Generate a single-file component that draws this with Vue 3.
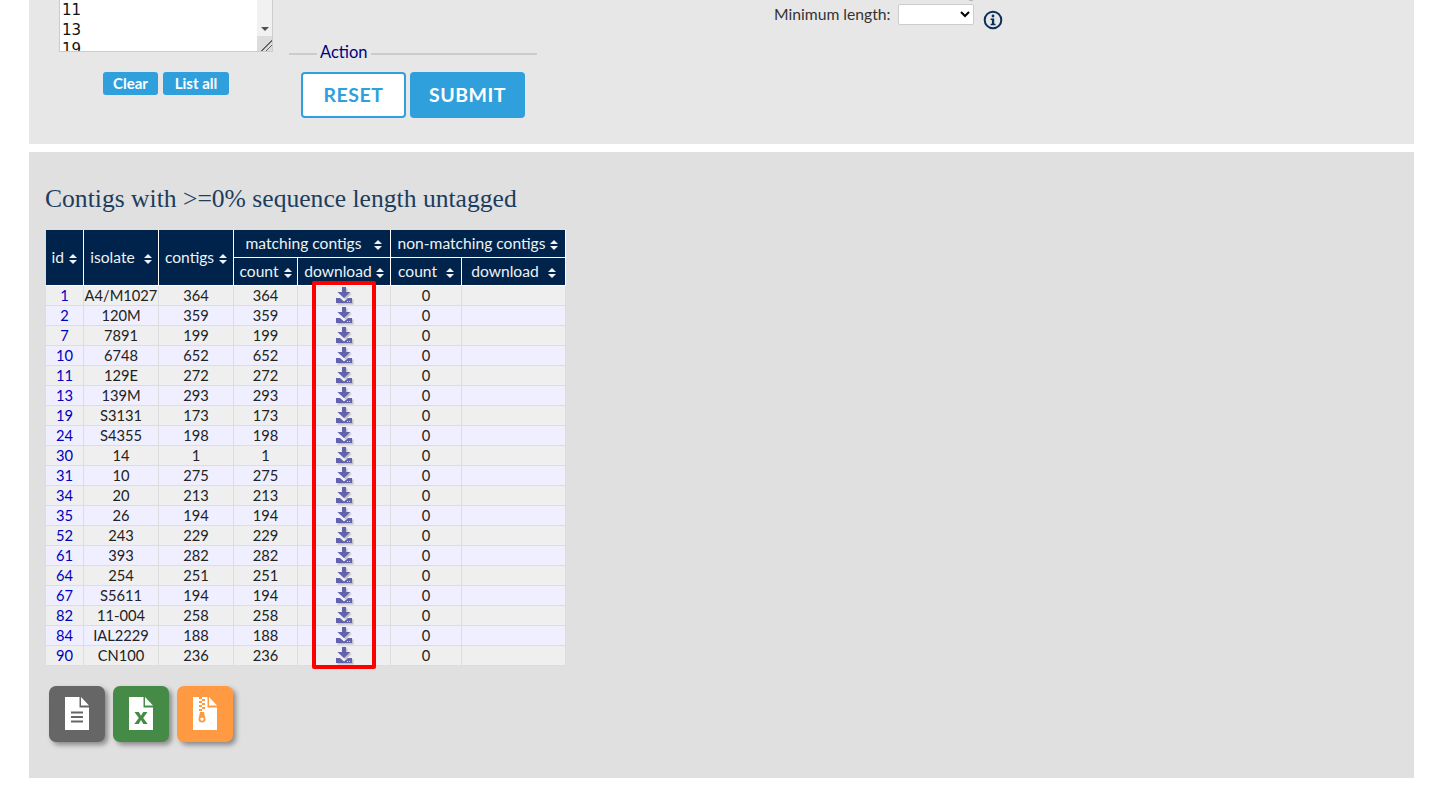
<template>
  <div class="page">
    <section class="panel top">
      <div class="isolates">
        <div class="listbox">
          <div class="list-items">
            <div v-for="n in visibleIds" :key="n">{{ n }}</div>
          </div>
          <div class="scrollbar">
            <span class="scroll-thumb"></span>
            <span class="scroll-arrow"></span>
            <span class="resizer"></span>
          </div>
        </div>
        <div class="list-buttons">
          <button class="small-btn clear">Clear</button>
          <button class="small-btn all">List all</button>
        </div>
      </div>

      <fieldset class="action">
        <legend>Action</legend>
        <button class="big-btn reset">RESET</button>
        <button class="big-btn submit">SUBMIT</button>
      </fieldset>

      <div class="min-length">
        <svg class="info clipped" viewBox="0 0 20 20"><circle cx="10" cy="10" r="8.3" /></svg>
        <div class="min-row">
          <label>Minimum length:</label>
          <select class="min-select"><option></option></select>
          <svg class="info" viewBox="0 0 20 20">
            <circle cx="10" cy="10" r="8.3" />
            <circle class="dot" cx="10" cy="6" r="1.4" />
            <path class="dot" d="M7.6 8.6h3.6v5.2h1.3v1.500H7.6v-1.500h1.300v-3.700H7.600z" />
          </svg>
        </div>
      </div>
    </section>

    <section class="panel results">
      <h2>Contigs with &gt;=0% sequence length untagged</h2>

      <div class="table-wrap">
        <table>
          <colgroup>
            <col v-for="w in colWidths" :key="w.id" :style="{ width: w.px + 'px' }" />
          </colgroup>
          <thead>
            <tr>
              <th rowspan="2">id<i class="sort"></i></th>
              <th rowspan="2">isolate<i class="sort wide"></i></th>
              <th rowspan="2">contigs<i class="sort"></i></th>
              <th class="shifted" colspan="2">matching contigs<i class="sort far"></i></th>
              <th colspan="2">non-matching contigs<i class="sort"></i></th>
            </tr>
            <tr class="sub">
              <th>count<i class="sort"></i></th>
              <th>download<i class="sort tight"></i></th>
              <th>count<i class="sort wide"></i></th>
              <th>download<i class="sort wide"></i></th>
            </tr>
          </thead>
          <tbody>
            <tr v-for="row in rows" :key="row[0]">
              <td><a href="#">{{ row[0] }}</a></td>
              <td>{{ row[1] }}</td>
              <td>{{ row[2] }}</td>
              <td>{{ row[2] }}</td>
              <td class="dl">
                <svg viewBox="0 0 20 18" width="20" height="18">
                  <path class="dl-shadow" d="M9.500 1.500h4v5h4.500l-6.500 6-6.500-6h4.500zM3.500 12.500h4l4 3.500 4-3.500h4v5h-16z" />
                  <path class="dl-icon" d="M8 0h4v5h4.500l-6.500 6-6.500-6H8zM2 11h4l4 3.500 4-3.500h4v5H2z" />
                  <path class="dl-dots" d="M13 14h1v1h-1zM15 14h1v1h-1z" />
                </svg>
              </td>
              <td>0</td>
              <td></td>
            </tr>
          </tbody>
        </table>
        <div class="highlight"></div>
      </div>

      <div class="exports">
        <a class="export grey" href="#">
          <svg viewBox="0 0 24 33" width="24" height="33">
            <path class="sheet" d="M0 0h14.500v10.500H24V33H0zM16 0l8 8.500h-8z" />
            <path class="mark" d="M6 14.500h12v2H6zM6 19h12v2H6zM6 23.500h12v2H6z" />
          </svg>
        </a>
        <a class="export green" href="#">
          <svg viewBox="0 0 24 33" width="24" height="33">
            <path class="sheet" d="M0 0h14.500v10.500H24V33H0zM16 0l8 8.500h-8z" />
            <path class="mark" d="M5.500 15h4.300l2.200 3.800 2.200-3.800h4.300l-4.300 6 4.500 6h-4.400L12 23.100 9.700 27H5.300l4.500-6z" />
          </svg>
        </a>
        <a class="export orange" href="#">
          <svg viewBox="0 0 24 33" width="24" height="33">
            <path class="sheet" d="M0 0h14.500v10.500H24V33H0zM16 0l8 8.500h-8z" />
            <path class="mark" d="M6 0h3v2H6zM9 2h3v2H9zM6 4h3v2H6zM9 6h3v2H9zM6 8h3v2H6zM9 10h3v2H9zM6 12h3v2H6z" />
            <path class="mark" fill-rule="evenodd" d="M7 15h4l1.500 7a3.500 3.500 0 1 1-7 0zM9 20.400a1.700 1.700 0 1 0 0 3.400 1.700 1.700 0 0 0 0-3.400z" />
          </svg>
        </a>
      </div>
    </section>
  </div>
</template>

<script setup>
const visibleIds = [11, 13, 19];

const colWidths = [
  { id: "id", px: 38 },
  { id: "isolate", px: 75 },
  { id: "contigs", px: 75 },
  { id: "count", px: 64 },
  { id: "download", px: 93 },
  { id: "count2", px: 71 },
  { id: "download2", px: 104 },
];

const rows = [
  [1, "A4/M1027", 364],
  [2, "120M", 359],
  [7, "7891", 199],
  [10, "6748", 652],
  [11, "129E", 272],
  [13, "139M", 293],
  [19, "S3131", 173],
  [24, "S4355", 198],
  [30, "14", 1],
  [31, "10", 275],
  [34, "20", 213],
  [35, "26", 194],
  [52, "243", 229],
  [61, "393", 282],
  [64, "254", 251],
  [67, "S5611", 194],
  [82, "11-004", 258],
  [84, "IAL2229", 188],
  [90, "CN100", 236],
];
</script>

<style>
html,
body {
  background: #fff;
  overflow: hidden;
}
</style>

<style scoped>
.page {
  padding: 0 29px;
  height: 786px;
  font-family: "Lato", "Noto Sans", sans-serif;
  font-size: 15px;
  color: #222;
}

.panel {
  width: 1385px;
}

.top {
  height: 144px;
  background: #e7e7e7;
  display: flex;
  overflow: hidden;
  margin-bottom: 8px;
}

/* list box is scrolled off the top of the page */
.isolates {
  margin-left: 30px;
  width: 214px;
}

.listbox {
  display: flex;
  width: 214px;
  height: 52px;
  background: #fff;
  border: 1px solid #ccc;
  border-top: 0;
  box-sizing: border-box;
  overflow: hidden;
}

.list-items {
  flex: 1;
  padding: 1px 0 0 2px;
  font-family: "DejaVu Sans", sans-serif;
  font-size: 15px;
  line-height: 19.500px;
  color: #111;
  overflow: hidden;
}

.scrollbar {
  width: 15px;
  background: #f1f1f1;
  display: flex;
  flex-direction: column;
  align-items: center;
}

.scroll-thumb {
  flex: 1;
}

.scroll-arrow {
  width: 0;
  height: 0;
  border: 4px solid transparent;
  border-top: 4px solid #505050;
  border-bottom: 0;
  margin-bottom: 5px;
}

.resizer {
  width: 15px;
  height: 15px;
  background:
    linear-gradient(135deg, transparent 62%, #666 62%, #666 67%, transparent 67%, transparent 78%, #666 78%, #666 83%, transparent 83%),
    #dcdcdc;
}

.list-buttons {
  display: flex;
  justify-content: center;
  gap: 5px;
  margin-top: 20px;
}

.small-btn {
  height: 23px;
  padding: 0 0 2px;
  border: 0;
  border-radius: 3px;
  background: #30a0dc;
  color: #fff;
  font: 700 15px "Lato", sans-serif;
}

.clear {
  width: 55px;
}

.all {
  width: 66px;
}

.action {
  margin: 43px 0 0 16px;
  width: 248px;
  height: 80px;
  box-sizing: border-box;
  padding: 7px 0 0 12px;
  border: 0;
  border-top: 2px solid #ccc;
  display: flex;
  gap: 4px;
  align-items: flex-start;
}

.action legend {
  margin-left: 16px;
  padding: 0 3px 4px;
  font-size: 16.5px;
  line-height: 18px;
  color: #000080;
}

.big-btn {
  height: 46px;
  padding: 0 0 2px;
  border-radius: 4px;
  font: 700 19.500px "Lato", sans-serif;
  letter-spacing: 0.5px;
  box-sizing: border-box;
}

.reset {
  width: 105px;
  background: #fff;
  color: #30a0dc;
  border: 2px solid #30a0dc;
}

.submit {
  width: 115px;
  background: #30a0dc;
  color: #fff;
  border: 0;
}

.min-length {
  margin-left: 237px;
  margin-top: -17px;
  position: relative;
}

.info.clipped {
  display: block;
  margin: 0 0 3px 188px;
  height: 18px;
  width: 18px;
}

.min-row {
  display: flex;
  align-items: flex-start;
  color: #333;
}

.min-row label {
  font-size: 15.700px;
  line-height: 20px;
  margin-right: 7px;
  width: 117px;
  white-space: nowrap;
}

.min-select {
  width: 76px;
  height: 21px;
  background: #fff;
  border: 1px solid #ccc;
  border-radius: 2px;
}

.info {
  width: 20px;
  height: 20px;
  margin-left: 9px;
  margin-top: 6px;
  fill: none;
  stroke: #0b2f5b;
  stroke-width: 2;
}

.info .dot {
  fill: #0b2f5b;
  stroke: none;
}

.results {
  height: 626px;
  background: #e0e0e0;
  padding: 31px 16px 0;
  box-sizing: border-box;
}

h2 {
  margin: 0 0 15px;
  font: 400 25.600px/32px "Liberation Serif", serif;
  color: #1c3d5e;
}

.table-wrap {
  position: relative;
  width: 520px;
}

table {
  border-collapse: collapse;
  table-layout: fixed;
  width: 520px;
  text-align: center;
}

th {
  height: 27px;
  padding: 0;
  box-sizing: border-box;
  background: #00234b;
  color: #eef2f6;
  font-weight: 400;
  font-size: 15.600px;
  border: 1px solid #fff;
  white-space: nowrap;
}

th.shifted {
  padding-left: 4px;
}

.sub th {
  height: 28px;
}

thead tr:first-child th {
  border-top: 0;
}

thead th:first-child {
  border-left: 0;
}

.sort {
  display: inline-block;
  position: relative;
  width: 8px;
  height: 10px;
  margin-left: 5px;
  vertical-align: -1px;
}

.sort::before,
.sort::after {
  content: "";
  position: absolute;
  left: 0;
  border-left: 4px solid transparent;
  border-right: 4px solid transparent;
}

.sort::before {
  top: 0;
  border-bottom: 4px solid #eef2f6;
}

.sort::after {
  bottom: 0;
  border-top: 4px solid #eef2f6;
}

.sort.wide {
  margin-left: 9px;
}

.sort.far {
  margin-left: 13px;
}

.sort.tight {
  margin-left: 4px;
}

td {
  height: 20px;
  padding: 0;
  box-sizing: border-box;
  border: 1px solid #ddd;
  background: #efefef;
  color: #222;
  font-size: 14.700px;
  line-height: 19px;
}

tbody tr:nth-child(even) td {
  background: #efefff;
}

td a {
  color: #0000c0;
  text-decoration: none;
}

td.dl {
  line-height: 0;
}

.dl svg {
  display: inline-block;
  vertical-align: middle;
  margin-top: 1px;
}

.dl-icon {
  fill: #6262ad;
}

.dl-shadow {
  fill: #c4c4c4;
}

.dl-dots {
  fill: #d8d8ee;
}

.highlight {
  position: absolute;
  left: 267px;
  top: 51px;
  width: 64px;
  height: 388px;
  box-sizing: border-box;
  border: 4px solid #f00;
  border-radius: 2px;
  pointer-events: none;
}

.exports {
  display: flex;
  gap: 8px;
  margin: 20px 0 0 4px;
}

.export {
  width: 56px;
  height: 56px;
  border-radius: 7px;
  display: flex;
  align-items: center;
  justify-content: center;
  box-shadow: 3px 3px 5px #8a8a8a;
}

.grey {
  background: #666;
}

.green {
  background: #458a47;
}

.orange {
  background: #ff9a42;
}

.sheet {
  fill: #fff;
}

.grey .mark {
  fill: #666;
}

.green .mark {
  fill: #458a47;
}

.orange .mark {
  fill: #ff9a42;
}
</style>
